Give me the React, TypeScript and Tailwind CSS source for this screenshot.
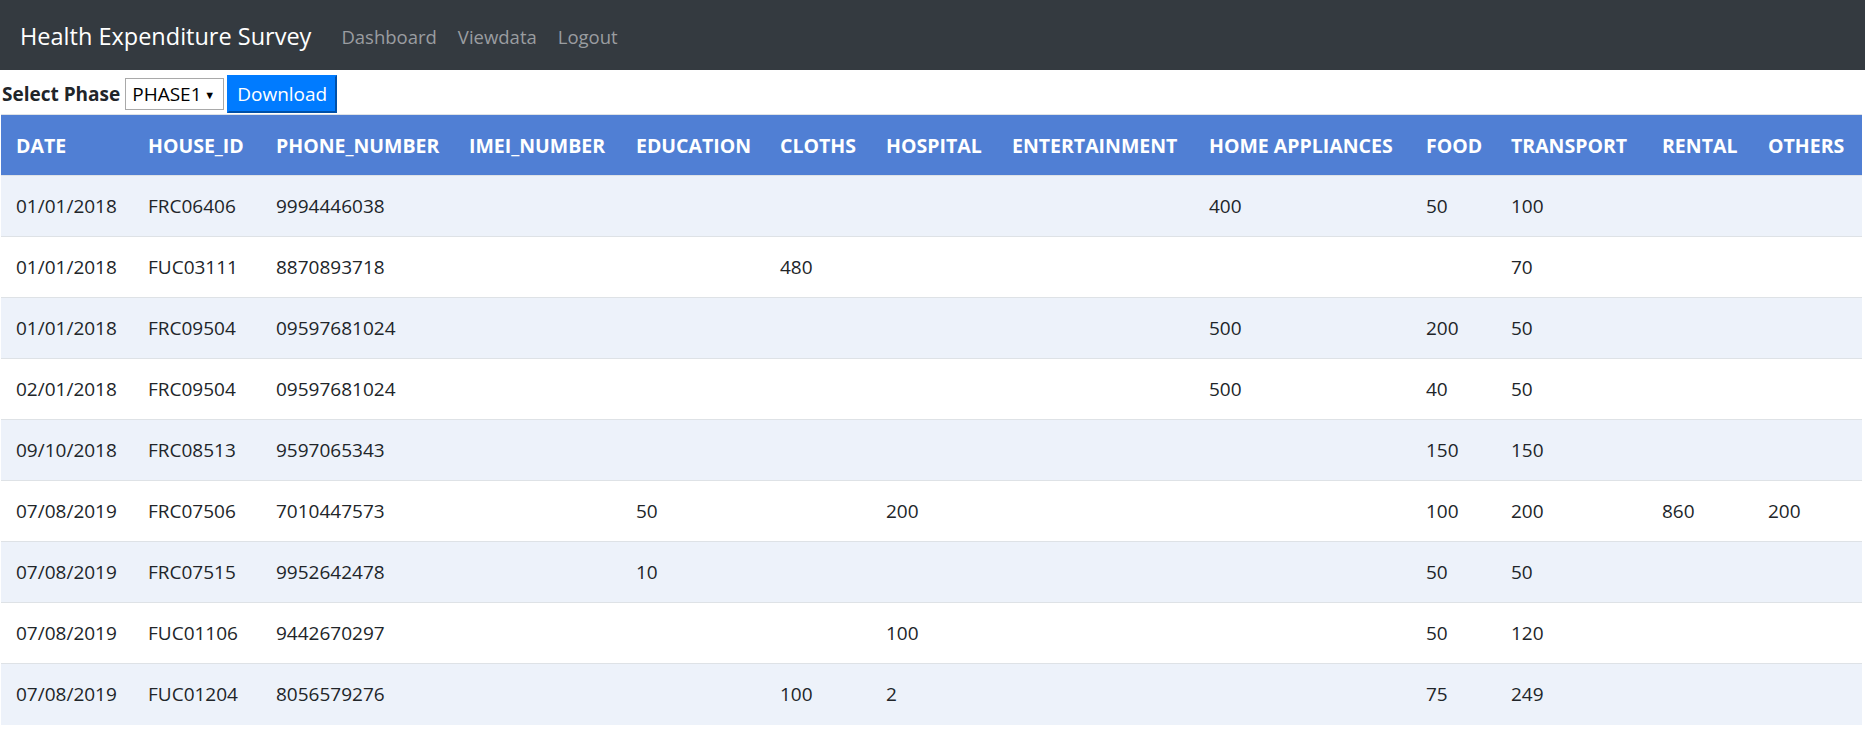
import React from 'react';

const font = { fontFamily: '"Open Sans", "Noto Sans", sans-serif' };

const columns = [
  { key: 'date', label: 'DATE', w: 'w-[132px]' },
  { key: 'house', label: 'HOUSE_ID', w: 'w-[128px]' },
  { key: 'phone', label: 'PHONE_NUMBER', w: 'w-[193px]' },
  { key: 'imei', label: 'IMEI_NUMBER', w: 'w-[167px]' },
  { key: 'education', label: 'EDUCATION', w: 'w-[144px]' },
  { key: 'cloths', label: 'CLOTHS', w: 'w-[106px]' },
  { key: 'hospital', label: 'HOSPITAL', w: 'w-[126px]' },
  { key: 'entertainment', label: 'ENTERTAINMENT', w: 'w-[197px]' },
  { key: 'home', label: 'HOME APPLIANCES', w: 'w-[217px]' },
  { key: 'food', label: 'FOOD', w: 'w-[85px]' },
  { key: 'transport', label: 'TRANSPORT', w: 'w-[151px]' },
  { key: 'rental', label: 'RENTAL', w: 'w-[106px]' },
  { key: 'others', label: 'OTHERS', w: 'w-[109px]' },
];

type Row = Record<string, string>;

const rows: Row[] = [
  { date: '01/01/2018', house: 'FRC06406', phone: '9994446038', home: '400', food: '50', transport: '100' },
  { date: '01/01/2018', house: 'FUC03111', phone: '8870893718', cloths: '480', transport: '70' },
  { date: '01/01/2018', house: 'FRC09504', phone: '09597681024', home: '500', food: '200', transport: '50' },
  { date: '02/01/2018', house: 'FRC09504', phone: '09597681024', home: '500', food: '40', transport: '50' },
  { date: '09/10/2018', house: 'FRC08513', phone: '9597065343', food: '150', transport: '150' },
  {
    date: '07/08/2019', house: 'FRC07506', phone: '7010447573', education: '50', hospital: '200',
    food: '100', transport: '200', rental: '860', others: '200',
  },
  { date: '07/08/2019', house: 'FRC07515', phone: '9952642478', education: '10', food: '50', transport: '50' },
  { date: '07/08/2019', house: 'FUC01106', phone: '9442670297', hospital: '100', food: '50', transport: '120' },
  { date: '07/08/2019', house: 'FUC01204', phone: '8056579276', cloths: '100', hospital: '2', food: '75', transport: '249' },
];

export default function App() {
  return (
    <div className="min-h-screen bg-white text-[#212529]" style={font}>
      {/* Navbar */}
      <nav className="flex h-[70px] items-center bg-[#343a40] px-[20px] pt-[3px]">
        <span className="mr-[30px] text-[23.5px] text-white">Health Expenditure Survey</span>
        <a className="mr-[21px] text-[18.5px] text-[#9a9da0]">Dashboard</a>
        <a className="mr-[21px] text-[18.5px] text-[#9a9da0]">Viewdata</a>
        <a className="text-[18.5px] text-[#9a9da0]">Logout</a>
      </nav>

      {/* Phase picker */}
      <div className="flex items-center pb-px pl-[2px] pt-[5px]">
        <label className="mr-[5px] text-[19px] font-bold">Select Phase</label>
        <div className="relative mr-[3px]">
          <select className="h-[32px] w-[99px] appearance-none border border-[#a9a9a9] bg-white pl-[6px] text-[19px] text-black outline-none">
            <option>PHASE1</option>
          </select>
          <span className="pointer-events-none absolute right-[9px] top-[9px] text-[11px] text-black">▼</span>
        </div>
        <button className="h-[38px] w-[110px] border-2 border-b-[#0050a8] border-l-[#007bff] border-r-[#0050a8] border-t-[#007bff] bg-[#007bff] text-[19px] text-white">
          Download
        </button>
      </div>

      {/* Table */}
      <table className="ml-px w-[1861px] table-fixed border-collapse">
        <thead>
          <tr className="border-t border-[#dee2e6] bg-[#507fd4]">
            {columns.map((c) => (
              <th
                key={c.key}
                className={`${c.w} h-[61px] whitespace-nowrap px-[15px] pt-[2px] text-left text-[19.5px] font-bold text-white`}
              >
                {c.label}
              </th>
            ))}
          </tr>
        </thead>
        <tbody>
          {rows.map((r, i) => (
            <tr key={i} className={`border-t border-[#dee2e6] ${i % 2 === 0 ? 'bg-[#edf2fa]' : 'bg-white'}`}>
              {columns.map((c) => (
                <td key={c.key} className="h-[61px] whitespace-nowrap px-[15px] text-[19px]">
                  {r[c.key] ?? ''}
                </td>
              ))}
            </tr>
          ))}
        </tbody>
      </table>
    </div>
  );
}
